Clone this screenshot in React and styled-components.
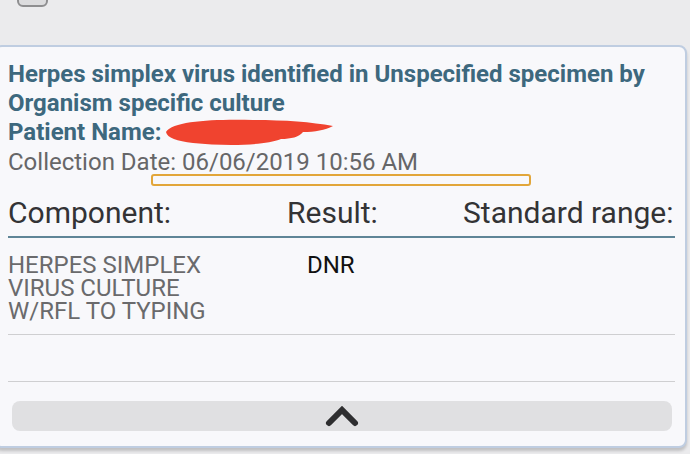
import React from 'react';
import styled, { createGlobalStyle } from 'styled-components';

const GlobalStyle = createGlobalStyle`
  html, body {
    margin: 0;
    padding: 0;
    background: #ebebed;
    font-family: Roboto, "Liberation Sans", sans-serif;
    overflow: hidden;
  }
`;

const Screen = styled.div`
  width: 690px;
  height: 454px;
  overflow: hidden;
  background: #ebebed;
`;

const TopStrip = styled.div`
  display: flex;
  align-items: flex-start;
  height: 45px;
  padding-left: 17px;
`;

const Checkbox = styled.div`
  width: 27px;
  height: 27px;
  margin-top: -24px;
  border: 2px solid #8e8e90;
  border-radius: 6px;
  background: #dcdcde;
`;

const Card = styled.section`
  margin: 0 3px 0 -6px;
  height: 403px;
  box-sizing: border-box;
  background: #f8f8fb;
  border: 2px solid #bfcde1;
  border-radius: 8px;
  box-shadow: 0 3px 3px rgba(0, 0, 0, 0.18);
  padding: 13px 13px 0 12px;
`;

const Title = styled.h2`
  margin: 0;
  font-size: 24px;
  line-height: 29px;
  font-weight: 700;
  color: #3d687e;
`;

const PatientRow = styled.div`
  position: relative;
  font-size: 24px;
  line-height: 29px;
  font-weight: 700;
  color: #3d687e;
`;

const Redaction = styled.svg`
  position: absolute;
  left: 155px;
  top: -2px;
`;

const DateLine = styled.div`
  font-size: 24px;
  line-height: 30px;
  color: #666668;
`;

const Highlight = styled.div`
  width: 380px;
  height: 12px;
  box-sizing: border-box;
  margin: -3px 0 0 143px;
  border: 2px solid #e2a63a;
  border-radius: 3px;
`;

const Grid = styled.div`
  display: grid;
  grid-template-columns: 279px 176px 1fr;
  margin-top: 10px;
`;

const HeadCell = styled.div`
  font-size: 30px;
  line-height: 34px;
  color: #333335;
  padding-bottom: 6px;
  border-bottom: 2px solid #5f8597;
  text-align: ${p => (p.$right ? 'right' : 'left')};
  padding-right: ${p => (p.$right ? '2px' : '0')};
  white-space: nowrap;
`;

const Cell = styled.div`
  font-size: 24px;
  line-height: 23px;
  color: ${p => (p.$dark ? '#111' : '#6a6a6c')};
  padding: ${p => (p.$dark ? '16px 0 0 20px' : '16px 0 11px')};
  min-height: ${p => (p.$empty ? '47px' : 'auto')};
  box-sizing: border-box;
  border-bottom: 1px solid #cfcfd1;
`;

const CollapseButton = styled.button`
  display: flex;
  align-items: center;
  justify-content: center;
  width: 660px;
  height: 30px;
  margin: 19px 0 0 4px;
  border: none;
  border-radius: 8px;
  background: #e0e0e2;
  padding: 0;
`;

export default function App() {
  return (
    <Screen>
      <GlobalStyle />
      <TopStrip>
        <Checkbox />
      </TopStrip>
      <Card>
        <Title>
          Herpes simplex virus identified in Unspecified specimen by Organism specific culture
        </Title>
        <PatientRow>
          Patient Name:
          <Redaction width="172" height="32" viewBox="0 0 172 32">
            <path
              d="M3 16 C10 5 50 3 90 4 C122 4 148 6 170 10 C162 14 152 16 140 16 C136 21 128 23 118 23 C100 30 60 30 30 27 C14 25 4 22 3 16 Z"
              fill="#f0432f"
            />
          </Redaction>
        </PatientRow>
        <DateLine>Collection Date: 06/06/2019 10:56 AM</DateLine>
        <Highlight />
        <Grid>
          <HeadCell>Component:</HeadCell>
          <HeadCell>Result:</HeadCell>
          <HeadCell $right>Standard range:</HeadCell>
          <Cell>
            HERPES SIMPLEX
            <br />
            VIRUS CULTURE
            <br />
            W/RFL TO TYPING
          </Cell>
          <Cell $dark>DNR</Cell>
          <Cell />
          <Cell $empty />
          <Cell $empty />
          <Cell $empty />
        </Grid>
        <CollapseButton aria-label="Collapse">
          <svg width="36" height="24" viewBox="0 0 36 24">
            <polyline
              points="5,19 18,6 31,19"
              fill="none"
              stroke="#2e2e30"
              strokeWidth="6"
              strokeLinecap="round"
              strokeLinejoin="miter"
            />
          </svg>
        </CollapseButton>
      </Card>
    </Screen>
  );
}
